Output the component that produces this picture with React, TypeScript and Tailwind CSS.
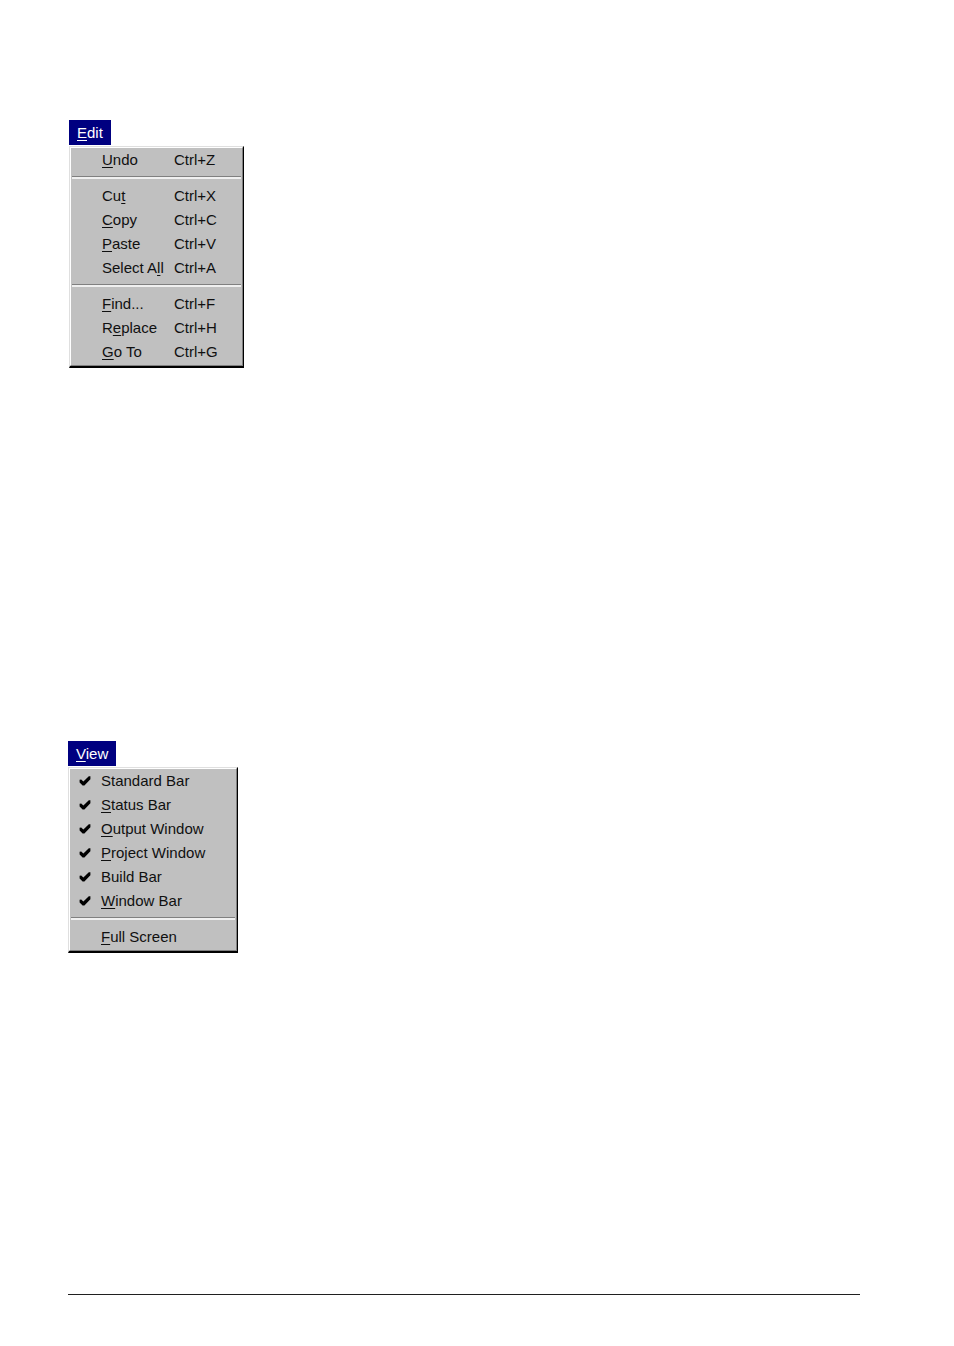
import React from 'react';

type Item = {
  label: string;
  // index of the underlined access key
  accessKey?: number;
  shortcut?: string;
  checked?: boolean;
};

const editGroups: Item[][] = [
  [{ label: 'Undo', accessKey: 0, shortcut: 'Ctrl+Z' }],
  [
    { label: 'Cut', accessKey: 2, shortcut: 'Ctrl+X' },
    { label: 'Copy', accessKey: 0, shortcut: 'Ctrl+C' },
    { label: 'Paste', accessKey: 0, shortcut: 'Ctrl+V' },
    { label: 'Select All', accessKey: 8, shortcut: 'Ctrl+A' },
  ],
  [
    { label: 'Find...', accessKey: 0, shortcut: 'Ctrl+F' },
    { label: 'Replace', accessKey: 1, shortcut: 'Ctrl+H' },
    { label: 'Go To', accessKey: 0, shortcut: 'Ctrl+G' },
  ],
];

const viewGroups: Item[][] = [
  [
    { label: 'Standard Bar', checked: true },
    { label: 'Status Bar', accessKey: 0, checked: true },
    { label: 'Output Window', accessKey: 0, checked: true },
    { label: 'Project Window', accessKey: 0, checked: true },
    { label: 'Build Bar', checked: true },
    { label: 'Window Bar', accessKey: 0, checked: true },
  ],
  [{ label: 'Full Screen', accessKey: 0 }],
];

const Label = ({ text, accessKey }: { text: string; accessKey?: number }) => {
  if (accessKey === undefined) return <span>{text}</span>;
  return (
    <span>
      {text.slice(0, accessKey)}
      <u className="underline decoration-1 underline-offset-2 [text-decoration-skip-ink:none]">
        {text[accessKey]}
      </u>
      {text.slice(accessKey + 1)}
    </span>
  );
};

const CheckMark = () => (
  <svg className="w-3 h-3" viewBox="0 0 12 12" aria-hidden="true">
    <path d="M0.6 4.8 L2.2 4.4 L4.4 6.6 L9.8 1.2 L11.4 1.2 V4.2 L5.4 10.4 H3.6 L0.6 7.4 Z" fill="#000" />
  </svg>
);

const MenuItem = ({ item }: { item: Item }) => (
  <button
    type="button"
    role={item.checked ? 'menuitemcheckbox' : 'menuitem'}
    aria-checked={item.checked}
    className="flex w-full h-6 items-center text-left whitespace-nowrap"
  >
    <span className="w-[31px] pl-[9px] shrink-0">{item.checked && <CheckMark />}</span>
    <span className={item.shortcut ? 'w-[72px] shrink-0' : ''}>
      <Label text={item.label} accessKey={item.accessKey} />
    </span>
    {item.shortcut && <span>{item.shortcut}</span>}
  </button>
);

type MenuProps = {
  title: string;
  groups: Item[][];
  width: string;
};

const Menu = ({ title, groups, width }: MenuProps) => (
  <div className="flex flex-col items-start">
    <button type="button" className="h-[25px] px-2 bg-[#000080] text-white">
      <Label text={title} accessKey={0} />
    </button>
    <div
      role="menu"
      className={`${width} mt-px bg-[#c0c0c0] border-l border-t border-l-[#dfdfdf] border-t-[#dfdfdf] border-r border-b-2 border-r-black border-b-black`}
    >
      <div className="pb-px border-l border-t border-r border-b border-l-white border-t-white border-r-[#808080] border-b-[#808080]">
        {groups.map((group, index) => (
          <React.Fragment key={index}>
            {index > 0 && (
              <div role="separator" className="mx-px mt-1 mb-[5px] h-[3px] bg-[#f0f0f0] border-t border-[#808080]" />
            )}
            {group.map((item) => (
              <MenuItem key={item.label} item={item} />
            ))}
          </React.Fragment>
        ))}
      </div>
    </div>
  </div>
);

const App = () => {
  return (
    <div className="min-h-screen bg-white pl-17 pr-[94px] pt-30 pb-[51px] flex flex-col font-['Liberation_Sans',Arial,sans-serif] text-[15px] leading-6 text-[#101010]">
      <div className="pl-px">
        <Menu title="Edit" groups={editGroups} width="w-[175px]" />
      </div>
      <div className="mt-[373px]">
        <Menu title="View" groups={viewGroups} width="w-[170px]" />
      </div>
      <hr className="mt-auto border-t border-[#202020]" />
    </div>
  );
};

export default App;
